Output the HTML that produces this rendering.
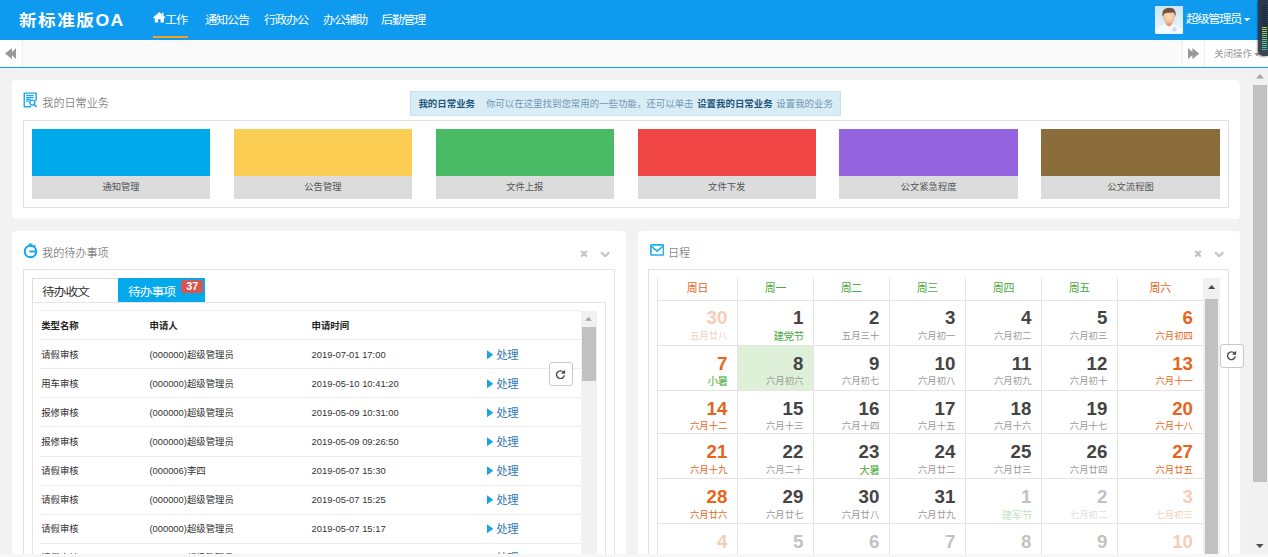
<!DOCTYPE html>
<html lang="zh-CN"><head><meta charset="utf-8"><title>新标准版OA</title>
<style>
*{box-sizing:border-box;margin:0;padding:0}
html,body{width:1268px;height:557px;overflow:hidden;background:#f2f2f2}
body{position:relative;font-family:"Liberation Sans","Noto Sans CJK SC",sans-serif;font-size:9.4px;color:#333;-webkit-font-smoothing:antialiased}
.abs{position:absolute}
.t{position:absolute;white-space:nowrap;line-height:1}
#top{left:0;top:0;width:1268px;height:39.6px;background:#0e9aef}
#logo{left:19.4px;top:12.4px;font-size:16.2px;font-weight:700;color:#fff;letter-spacing:1.4px;transform:scaleX(1.086);transform-origin:0 0}
.nav{color:#fff;font-size:11.4px;letter-spacing:-1.1px;top:15px;transform:scaleX(1.07);transform-origin:0 0}
#bar2{left:0;top:39.6px;width:1268px;height:27.3px;background:#fafafa}
#bar2line{left:0;top:66.9px;width:1268px;height:1.2px;background:#0ca6e9}
.wbtn{background:#fff;top:39.6px;height:27.3px}
.panel{background:#fff;border-radius:4px}
.ibox{border:1px solid #e2e2e2;background:#fff}
.h{font-size:11.1px;color:#555;letter-spacing:0;font-weight:300}
.tile{width:178.4px;top:129px;height:69.6px;background:#dcdcdc}
.tile i{display:block;height:46.8px}
.tile span{display:block;text-align:center;font-size:9.3px;color:#555;line-height:22.8px}
.row{left:40px;width:540.5px;height:29px;border-top:1px solid #ededed}
.row .t{top:9.5px;font-size:9.4px;color:#333}
.lnk{color:#1e8fd8;font-size:12.4px;letter-spacing:-1px}
.cal{font-family:"Liberation Sans","Noto Sans CJK SC",sans-serif}
.vl{width:1px;background:#e4e4e4}
.hl{height:1px;background:#e4e4e4}
.wk{font-size:10.9px;top:282.5px;text-align:center;letter-spacing:-0.3px}
.dn{font-size:18.7px;font-weight:700;text-align:right;color:#444}
.dl{font-size:9.4px;text-align:right;color:#999}
.or{color:#e8641b}
.gr{color:#4aa93c}
.fade{opacity:.32}
</style></head>
<body>
<div id="top" class="abs"></div>
<div id="logo" class="t">新标准版OA</div>
<svg class="abs" style="left:153px;top:12.2px" width="12.6" height="11.2" viewBox="0 0 26 22" preserveAspectRatio="none"><path fill="#fff" d="M13 3.2 L3.6 11 V20.5 H10.4 V14.2 H15.6 V20.5 H22.4 V11 Z"/><path fill="#fff" d="M13 0 L0 10.8 L1.6 12.7 L13 3.3 L24.4 12.7 L26 10.8 L21.6 7.1 V1.6 H18.4 V4.5 Z"/></svg>
<div class="t nav" style="left:164.8px">工作</div>
<div class="abs" style="left:153px;top:36.1px;width:35px;height:2px;background:#f5a31a"></div>
<div class="t nav" style="left:205.2px">通知公告</div>
<div class="t nav" style="left:264.2px">行政办公</div>
<div class="t nav" style="left:322.6px">办公辅助</div>
<div class="t nav" style="left:380.8px">后勤管理</div>
<svg class="abs" style="left:1155px;top:6px" width="28" height="27.8" viewBox="0 0 56 56" preserveAspectRatio="none">
<defs><linearGradient id="avbg" x1="0" y1="0" x2="0" y2="1"><stop offset="0" stop-color="#cde4f5"/><stop offset="1" stop-color="#eef6fc"/></linearGradient>
<radialGradient id="avsk" cx="0.5" cy="0.45" r="0.6"><stop offset="0" stop-color="#fcdcb9"/><stop offset="0.7" stop-color="#f3c39a"/><stop offset="1" stop-color="#e3a57b"/></radialGradient></defs>
<rect width="56" height="56" fill="url(#avbg)"/>
<path d="M2.5 56C3 46 8 41.5 18 38.5L23 36H33L38 38.5C48 41.5 53.5 46 54 56Z" fill="#f7fafd"/>
<path d="M21.6 30H34.4V36.5C33 39.5 30.5 41.5 28 41.5C25.500 41.5 23 39.500 21.600 36.5Z" fill="#dfa074"/>
<ellipse cx="28" cy="22.500" rx="11.4" ry="12.8" fill="url(#avsk)"/>
<path d="M15.500 22C12.500 11 18 3.300 28.500 3.300C38.500 3.300 43.500 10 40.600 21.500C40 17 38.500 14 36 12.500C31.500 14.500 22 12.500 18.500 15.500C17 17.500 16.500 19.500 15.500 22Z" fill="#6f5341"/>
<circle cx="38.8" cy="46.8" r="4.600" fill="#c8dff0"/>
</svg>
<div class="t nav" style="left:1185.8px;top:13px;font-size:11.6px;letter-spacing:-1.3px">超级管理员</div>
<svg class="abs" style="left:1244px;top:17.8px" width="6.2" height="3.4" viewBox="0 0 10 5.5"><path d="M0 0H10L5 5.5Z" fill="#fff"/></svg>
<div id="bar2" class="abs"></div>
<div class="abs wbtn" style="left:0;width:23.2px;border-right:1px solid #eee"></div>
<svg class="abs" style="left:5px;top:47.8px" width="11.3" height="11.2" viewBox="0 0 22 22"><path fill="#999" d="M22 0V22L13.5 14.2V22L0 11L13.5 0V7.800Z"/></svg>
<div class="abs wbtn" style="left:1182.4px;width:22px;border-left:1px solid #eee"></div>
<svg class="abs" style="left:1188.1px;top:47.8px" width="11.3" height="11.2" viewBox="0 0 22 22"><path fill="#999" d="M0 0V22L8.500 14.2V22L22 11L8.500 0V7.800Z"/></svg>
<div class="abs wbtn" style="left:1204.4px;width:63.6px;border-left:1px solid #eee"></div>
<div class="t" style="left:1214.3px;top:49px;font-size:9.4px;color:#999">关闭操作</div>
<svg class="abs" style="left:1253.6px;top:52.6px" width="6" height="3.2" viewBox="0 0 10 5.5"><path d="M0 0H10L5 5.5Z" fill="#999"/></svg>
<div id="bar2line" class="abs"></div>
<div class="abs" style="left:1251.2px;top:68.1px;width:16.8px;height:489px;background:#f1f1f1"></div>
<svg class="abs" style="left:1255.8px;top:74.4px" width="8" height="4.4" viewBox="0 0 10 5.5"><path d="M0 5.5H10L5 0Z" fill="#a3a3a3"/></svg>
<div class="abs" style="left:1253.4px;top:84.8px;width:13.2px;height:397.5px;background:#c1c1c1"></div>
<svg class="abs" style="left:1256px;top:543.6px" width="7.6" height="4.2" viewBox="0 0 10 5.5"><path d="M0 0H10L5 5.5Z" fill="#505050"/></svg>
<div class="abs panel" style="left:12px;top:80px;width:1227.6px;height:139px"></div>
<svg class="abs" style="left:23.2px;top:91.6px" width="15" height="16" viewBox="0 0 15 16" fill="none" stroke="#1aa9ea" stroke-width="1.4">
<path d="M13.15 9.2V1.15H1.25V14.75H7.9"/><path d="M3.1 3.7H10.6M3.1 5.5H10.6M3.1 7.4H7.6M3.1 9.2H6.4" stroke-width="1.25"/><circle cx="9.3" cy="10.6" r="2.5"/><path d="M11.1 12.6L13.7 14.9" stroke-width="1.6"/></svg>
<div class="t h" style="left:42.3px;top:97.6px">我的日常业务</div>
<div class="abs" style="left:410px;top:91px;width:431.2px;height:25px;background:#d9edf7;border:1px solid #c4e3f0"></div>
<div class="t" style="left:418.4px;top:99.4px;font-size:9.45px;color:#7096b0"><b style="color:#23577a">我的日常业务</b><span style="display:inline-block;width:10.9px"></span>你可以在这里找到您常用的一些功能，还可以单击<span style="display:inline-block;width:3.6px"></span><b style="color:#1f557a">设置我的日常业务</b><span style="display:inline-block;width:3.6px"></span>设置我的业务</div>
<div class="abs ibox" style="left:23px;top:119.8px;width:1205.8px;height:88px"></div>
<div class="abs tile" style="left:31.8px"><i style="background:#00a9ea"></i><span>通知管理</span></div>
<div class="abs tile" style="left:233.7px"><i style="background:#fbce53"></i><span>公告管理</span></div>
<div class="abs tile" style="left:435.6px"><i style="background:#49bb66"></i><span>文件上报</span></div>
<div class="abs tile" style="left:637.5px"><i style="background:#f04545"></i><span>文件下发</span></div>
<div class="abs tile" style="left:839.4px"><i style="background:#9464e0"></i><span>公文紧急程度</span></div>
<div class="abs tile" style="left:1041.3px"><i style="background:#8a6d3b"></i><span>公文流程图</span></div>
<div class="abs panel" style="left:12px;top:231px;width:614px;height:340px"></div>
<svg class="abs" style="left:23.3px;top:243.3px" width="15" height="16" viewBox="0 0 15 16" fill="none" stroke="#12a8ec" stroke-width="1.9">
<circle cx="7.45" cy="8.5" r="5.8"/><path d="M6.2 8.5H12.6"/><path d="M5.4 1.2H9.4" stroke-width="1.4"/><path d="M11 2.1L12.4 3.5" stroke-width="1.6"/><path d="M7.45 3.4V4.3M7.45 12.7V13.6M2.4 8.5H3.2" stroke-width="1.3"/></svg>
<div class="t h" style="left:42.1px;top:248px">我的待办事项</div>
<svg class="abs" style="left:580.3px;top:249.8px" width="8" height="7.6" viewBox="0 0 16 15"><path d="M2.5 2L13.5 13M13.5 2L2.5 13" stroke="#c4c4c4" stroke-width="4.4" fill="none"/></svg>
<svg class="abs" style="left:600px;top:250.6px" width="10.4" height="6.8" viewBox="0 0 21 14"><path d="M2.2 2.6L10.5 10.8L18.8 2.6" stroke="#c4c4c4" stroke-width="4.6" fill="none"/></svg>
<div class="abs ibox" style="left:23px;top:268.8px;width:592px;height:300px"></div>
<div class="abs" style="left:32px;top:278px;width:86.2px;height:24.4px;border:1px solid #ddd;border-right:0;border-bottom:0;background:#fff"></div>
<div class="abs" style="left:32px;top:301.6px;width:574.4px;height:270px;border:1px solid #e4e4e4;border-bottom:0"></div>
<div class="t" style="left:42px;top:286.6px;font-size:11.9px;letter-spacing:-0.9px;color:#333;transform:scaleX(1.07);transform-origin:0 0">待办收文</div>
<div class="abs" style="left:118.2px;top:277.8px;width:87.2px;height:24.2px;background:#04a9eb"></div>
<div class="t" style="left:128px;top:286.6px;font-size:11.9px;letter-spacing:-0.9px;color:#fff;transform:scaleX(1.07);transform-origin:0 0">待办事项</div>
<div class="abs" style="left:181.2px;top:279.8px;width:22px;height:13.2px;background:#d9534f;border-radius:2.5px"></div>
<div class="t" style="left:181.2px;top:280.6px;width:22px;text-align:center;font-size:10.8px;font-weight:700;color:#fff">37</div>
<div class="abs row" style="top:310px"><div class="t" style="left:1.2px;font-weight:700;color:#222">类型名称</div><div class="t" style="left:109.6px;font-weight:700;color:#222">申请人</div><div class="t" style="left:271.6px;font-weight:700;color:#222">申请时间</div></div>
<div class="abs row" style="top:339.12px"><div class="t" style="left:1.2px">请假审核</div><div class="t" style="left:109.4px">(000000)超级管理员</div><div class="t" style="left:271.6px">2019-07-01 17:00</div><svg class="abs" style="left:446.8px;top:9.6px" width="6.4" height="9.6" viewBox="0 0 7 10"><path d="M0 0L7 5L0 10Z" fill="#16a5e9"/></svg><div class="t lnk" style="left:456.2px;top:9.4px;font-size:11.4px;letter-spacing:-0.4px;color:#337ab7">处理</div></div>
<div class="abs row" style="top:368.24px"><div class="t" style="left:1.2px">用车审核</div><div class="t" style="left:109.4px">(000000)超级管理员</div><div class="t" style="left:271.6px">2019-05-10 10:41:20</div><svg class="abs" style="left:446.8px;top:9.6px" width="6.4" height="9.6" viewBox="0 0 7 10"><path d="M0 0L7 5L0 10Z" fill="#16a5e9"/></svg><div class="t lnk" style="left:456.2px;top:9.4px;font-size:11.4px;letter-spacing:-0.4px;color:#337ab7">处理</div></div>
<div class="abs row" style="top:397.36px"><div class="t" style="left:1.2px">报修审核</div><div class="t" style="left:109.4px">(000000)超级管理员</div><div class="t" style="left:271.6px">2019-05-09 10:31:00</div><svg class="abs" style="left:446.8px;top:9.6px" width="6.4" height="9.6" viewBox="0 0 7 10"><path d="M0 0L7 5L0 10Z" fill="#16a5e9"/></svg><div class="t lnk" style="left:456.2px;top:9.4px;font-size:11.4px;letter-spacing:-0.4px;color:#337ab7">处理</div></div>
<div class="abs row" style="top:426.48px"><div class="t" style="left:1.2px">报修审核</div><div class="t" style="left:109.4px">(000000)超级管理员</div><div class="t" style="left:271.6px">2019-05-09 09:26:50</div><svg class="abs" style="left:446.8px;top:9.6px" width="6.4" height="9.6" viewBox="0 0 7 10"><path d="M0 0L7 5L0 10Z" fill="#16a5e9"/></svg><div class="t lnk" style="left:456.2px;top:9.4px;font-size:11.4px;letter-spacing:-0.4px;color:#337ab7">处理</div></div>
<div class="abs row" style="top:455.60px"><div class="t" style="left:1.2px">请假审核</div><div class="t" style="left:109.4px">(000006)李四</div><div class="t" style="left:271.6px">2019-05-07 15:30</div><svg class="abs" style="left:446.8px;top:9.6px" width="6.4" height="9.6" viewBox="0 0 7 10"><path d="M0 0L7 5L0 10Z" fill="#16a5e9"/></svg><div class="t lnk" style="left:456.2px;top:9.4px;font-size:11.4px;letter-spacing:-0.4px;color:#337ab7">处理</div></div>
<div class="abs row" style="top:484.72px"><div class="t" style="left:1.2px">请假审核</div><div class="t" style="left:109.4px">(000000)超级管理员</div><div class="t" style="left:271.6px">2019-05-07 15:25</div><svg class="abs" style="left:446.8px;top:9.6px" width="6.4" height="9.6" viewBox="0 0 7 10"><path d="M0 0L7 5L0 10Z" fill="#16a5e9"/></svg><div class="t lnk" style="left:456.2px;top:9.4px;font-size:11.4px;letter-spacing:-0.4px;color:#337ab7">处理</div></div>
<div class="abs row" style="top:513.84px"><div class="t" style="left:1.2px">请假审核</div><div class="t" style="left:109.4px">(000000)超级管理员</div><div class="t" style="left:271.6px">2019-05-07 15:17</div><svg class="abs" style="left:446.8px;top:9.6px" width="6.4" height="9.6" viewBox="0 0 7 10"><path d="M0 0L7 5L0 10Z" fill="#16a5e9"/></svg><div class="t lnk" style="left:456.2px;top:9.4px;font-size:11.4px;letter-spacing:-0.4px;color:#337ab7">处理</div></div>
<div class="abs row" style="top:542.96px"><div class="t" style="left:1.2px">请假审核</div><div class="t" style="left:109.4px">(000000)超级管理员</div><div class="t" style="left:271.6px">2019-05-07 15:10</div><svg class="abs" style="left:446.8px;top:9.6px" width="6.4" height="9.6" viewBox="0 0 7 10"><path d="M0 0L7 5L0 10Z" fill="#16a5e9"/></svg><div class="t lnk" style="left:456.2px;top:9.4px;font-size:11.4px;letter-spacing:-0.4px;color:#337ab7">处理</div></div>
<div class="abs" style="left:581px;top:310.6px;width:15.8px;height:260px;background:#f1f1f1"></div>
<svg class="abs" style="left:585.4px;top:317px" width="7" height="3.8" viewBox="0 0 10 5.5"><path d="M0 5.5H10L5 0Z" fill="#a3a3a3"/></svg>
<div class="abs" style="left:582.2px;top:327.4px;width:13.4px;height:53.6px;background:#c1c1c1"></div>
<div class="abs" style="left:548.7px;top:362px;width:24.2px;height:24px;background:rgba(255,255,255,.86);border:1px solid #c8c8c8;border-radius:3px"></div>
<svg class="abs" style="left:555.3px;top:368.6px" width="10.8" height="10.8" viewBox="0 0 20 20" fill="none"><path d="M15.9 6.4A7.2 7.2 0 1 0 17.2 11.6" stroke="#4a4a4a" stroke-width="2.6"/><path d="M18.8 1.2V8.8H11.2Z" fill="#4a4a4a"/></svg>
<div class="abs panel" style="left:638px;top:231px;width:602px;height:340px"></div>
<svg class="abs" style="left:649.6px;top:244.2px" width="14.4" height="11.8" viewBox="0 0 29 24" fill="none" stroke="#22b0f0" stroke-width="3.4"><rect x="1.7" y="1.7" width="25.6" height="20.6" rx="1"/><path d="M2.4 4.4L14.5 14.6L26.6 4.4" stroke-width="3.2"/></svg>
<div class="t h" style="left:668px;top:248px">日程</div>
<svg class="abs" style="left:1194.3px;top:249.8px" width="8" height="7.6" viewBox="0 0 16 15"><path d="M2.5 2L13.5 13M13.5 2L2.5 13" stroke="#c4c4c4" stroke-width="4.4" fill="none"/></svg>
<svg class="abs" style="left:1214px;top:250.6px" width="10.4" height="6.8" viewBox="0 0 21 14"><path d="M2.2 2.6L10.5 10.8L18.8 2.6" stroke="#c4c4c4" stroke-width="4.6" fill="none"/></svg>
<div class="abs ibox" style="left:648px;top:268.8px;width:580.6px;height:300px"></div>
<div class="abs" style="left:737.4px;top:345.5px;width:76px;height:44.6px;background:#dff0d8"></div>
<div class="abs vl" style="left:656.9px;top:277.8px;height:290px"></div>
<div class="abs vl" style="left:736.9px;top:277.8px;height:290px"></div>
<div class="abs vl" style="left:812.9px;top:277.8px;height:290px"></div>
<div class="abs vl" style="left:888.8px;top:277.8px;height:290px"></div>
<div class="abs vl" style="left:964.9px;top:277.8px;height:290px"></div>
<div class="abs vl" style="left:1040.9px;top:277.8px;height:290px"></div>
<div class="abs vl" style="left:1116.8px;top:277.8px;height:290px"></div>
<div class="abs hl" style="left:657px;top:299.8px;width:546px"></div>
<div class="abs hl" style="left:657px;top:345.0px;width:546px"></div>
<div class="abs hl" style="left:657px;top:389.6px;width:546px"></div>
<div class="abs hl" style="left:657px;top:433.1px;width:546px"></div>
<div class="abs hl" style="left:657px;top:478.1px;width:546px"></div>
<div class="abs hl" style="left:657px;top:523.0px;width:546px"></div>
<div class="t wk or" style="left:657.4px;width:80.0px">周日</div>
<div class="t wk gr" style="left:737.4px;width:76.0px">周一</div>
<div class="t wk gr" style="left:813.4px;width:75.9px">周二</div>
<div class="t wk gr" style="left:889.3px;width:76.1px">周三</div>
<div class="t wk gr" style="left:965.4px;width:76.0px">周四</div>
<div class="t wk gr" style="left:1041.4px;width:75.9px">周五</div>
<div class="t wk or" style="left:1117.3px;width:85.7px">周六</div>
<div class="t dn or fade" style="left:667.4px;width:60px;top:309.4px">30</div>
<div class="t dl or fade" style="left:667.4px;width:60px;top:330.9px">五月廿八</div>
<div class="t dn " style="left:743.4px;width:60px;top:309.4px">1</div>
<div class="t dl gr" style="left:743.4px;width:60px;top:330.9px;font-size:10.6px;letter-spacing:-0.6px">建党节</div>
<div class="t dn " style="left:819.3px;width:60px;top:309.4px">2</div>
<div class="t dl " style="left:819.3px;width:60px;top:330.9px">五月三十</div>
<div class="t dn " style="left:895.4px;width:60px;top:309.4px">3</div>
<div class="t dl " style="left:895.4px;width:60px;top:330.9px">六月初一</div>
<div class="t dn " style="left:971.4px;width:60px;top:309.4px">4</div>
<div class="t dl " style="left:971.4px;width:60px;top:330.9px">六月初二</div>
<div class="t dn " style="left:1047.3px;width:60px;top:309.4px">5</div>
<div class="t dl " style="left:1047.3px;width:60px;top:330.9px">六月初三</div>
<div class="t dn or" style="left:1133.0px;width:60px;top:309.4px">6</div>
<div class="t dl or" style="left:1133.0px;width:60px;top:330.9px">六月初四</div>
<div class="t dn or" style="left:667.4px;width:60px;top:355.4px">7</div>
<div class="t dl gr" style="left:667.4px;width:60px;top:376.2px;font-size:10.6px;letter-spacing:-0.6px">小暑</div>
<div class="t dn " style="left:743.4px;width:60px;top:355.4px">8</div>
<div class="t dl " style="left:743.4px;width:60px;top:376.2px">六月初六</div>
<div class="t dn " style="left:819.3px;width:60px;top:355.4px">9</div>
<div class="t dl " style="left:819.3px;width:60px;top:376.2px">六月初七</div>
<div class="t dn " style="left:895.4px;width:60px;top:355.4px">10</div>
<div class="t dl " style="left:895.4px;width:60px;top:376.2px">六月初八</div>
<div class="t dn " style="left:971.4px;width:60px;top:355.4px">11</div>
<div class="t dl " style="left:971.4px;width:60px;top:376.2px">六月初九</div>
<div class="t dn " style="left:1047.3px;width:60px;top:355.4px">12</div>
<div class="t dl " style="left:1047.3px;width:60px;top:376.2px">六月初十</div>
<div class="t dn or" style="left:1133.0px;width:60px;top:355.4px">13</div>
<div class="t dl or" style="left:1133.0px;width:60px;top:376.2px">六月十一</div>
<div class="t dn or" style="left:667.4px;width:60px;top:399.9px">14</div>
<div class="t dl or" style="left:667.4px;width:60px;top:420.9px">六月十二</div>
<div class="t dn " style="left:743.4px;width:60px;top:399.9px">15</div>
<div class="t dl " style="left:743.4px;width:60px;top:420.9px">六月十三</div>
<div class="t dn " style="left:819.3px;width:60px;top:399.9px">16</div>
<div class="t dl " style="left:819.3px;width:60px;top:420.9px">六月十四</div>
<div class="t dn " style="left:895.4px;width:60px;top:399.9px">17</div>
<div class="t dl " style="left:895.4px;width:60px;top:420.9px">六月十五</div>
<div class="t dn " style="left:971.4px;width:60px;top:399.9px">18</div>
<div class="t dl " style="left:971.4px;width:60px;top:420.9px">六月十六</div>
<div class="t dn " style="left:1047.3px;width:60px;top:399.9px">19</div>
<div class="t dl " style="left:1047.3px;width:60px;top:420.9px">六月十七</div>
<div class="t dn or" style="left:1133.0px;width:60px;top:399.9px">20</div>
<div class="t dl or" style="left:1133.0px;width:60px;top:420.9px">六月十八</div>
<div class="t dn or" style="left:667.4px;width:60px;top:443.0px">21</div>
<div class="t dl or" style="left:667.4px;width:60px;top:464.9px">六月十九</div>
<div class="t dn " style="left:743.4px;width:60px;top:443.0px">22</div>
<div class="t dl " style="left:743.4px;width:60px;top:464.9px">六月二十</div>
<div class="t dn " style="left:819.3px;width:60px;top:443.0px">23</div>
<div class="t dl gr" style="left:819.3px;width:60px;top:464.9px;font-size:10.6px;letter-spacing:-0.6px">大暑</div>
<div class="t dn " style="left:895.4px;width:60px;top:443.0px">24</div>
<div class="t dl " style="left:895.4px;width:60px;top:464.9px">六月廿二</div>
<div class="t dn " style="left:971.4px;width:60px;top:443.0px">25</div>
<div class="t dl " style="left:971.4px;width:60px;top:464.9px">六月廿三</div>
<div class="t dn " style="left:1047.3px;width:60px;top:443.0px">26</div>
<div class="t dl " style="left:1047.3px;width:60px;top:464.9px">六月廿四</div>
<div class="t dn or" style="left:1133.0px;width:60px;top:443.0px">27</div>
<div class="t dl or" style="left:1133.0px;width:60px;top:464.9px">六月廿五</div>
<div class="t dn or" style="left:667.4px;width:60px;top:487.9px">28</div>
<div class="t dl or" style="left:667.4px;width:60px;top:509.9px">六月廿六</div>
<div class="t dn " style="left:743.4px;width:60px;top:487.9px">29</div>
<div class="t dl " style="left:743.4px;width:60px;top:509.9px">六月廿七</div>
<div class="t dn " style="left:819.3px;width:60px;top:487.9px">30</div>
<div class="t dl " style="left:819.3px;width:60px;top:509.9px">六月廿八</div>
<div class="t dn " style="left:895.4px;width:60px;top:487.9px">31</div>
<div class="t dl " style="left:895.4px;width:60px;top:509.9px">六月廿九</div>
<div class="t dn  fade" style="left:971.4px;width:60px;top:487.9px">1</div>
<div class="t dl gr fade" style="left:971.4px;width:60px;top:509.9px;font-size:10.6px;letter-spacing:-0.6px">建军节</div>
<div class="t dn  fade" style="left:1047.3px;width:60px;top:487.9px">2</div>
<div class="t dl  fade" style="left:1047.3px;width:60px;top:509.9px">七月初二</div>
<div class="t dn or fade" style="left:1133.0px;width:60px;top:487.9px">3</div>
<div class="t dl or fade" style="left:1133.0px;width:60px;top:509.9px">七月初三</div>
<div class="t dn or fade" style="left:667.4px;width:60px;top:533.4px">4</div>
<div class="t dn  fade" style="left:743.4px;width:60px;top:533.4px">5</div>
<div class="t dn  fade" style="left:819.3px;width:60px;top:533.4px">6</div>
<div class="t dn  fade" style="left:895.4px;width:60px;top:533.4px">7</div>
<div class="t dn  fade" style="left:971.4px;width:60px;top:533.4px">8</div>
<div class="t dn  fade" style="left:1047.3px;width:60px;top:533.4px">9</div>
<div class="t dn or fade" style="left:1133.0px;width:60px;top:533.4px">10</div>
<div class="abs" style="left:1203px;top:277.8px;width:16.8px;height:290px;background:#f1f1f1"></div>
<svg class="abs" style="left:1207.8px;top:285px" width="7.4" height="4" viewBox="0 0 10 5.5"><path d="M0 5.5H10L5 0Z" fill="#484848"/></svg>
<div class="abs" style="left:1204.9px;top:299px;width:13.6px;height:270px;background:#c1c1c1"></div>
<div class="abs" style="left:1219.7px;top:343.6px;width:24.2px;height:24px;background:rgba(255,255,255,.86);border:1px solid #c8c8c8;border-radius:3px"></div>
<svg class="abs" style="left:1226.3px;top:350.2px" width="10.8" height="10.8" viewBox="0 0 20 20" fill="none"><path d="M15.9 6.4A7.2 7.2 0 1 0 17.2 11.6" stroke="#4a4a4a" stroke-width="2.6"/><path d="M18.8 1.2V8.8H11.2Z" fill="#4a4a4a"/></svg>
<div class="abs" style="left:0;top:553.7px;width:1268px;height:3.3px;background:#f7f7f7"></div>
<div class="abs" style="left:1258.2px;top:0;width:9.8px;height:55.6px;background:rgba(42,48,62,.9);border-radius:0 0 0 5px;box-shadow:-1px 1px 2px rgba(0,0,0,.35)"></div><div class="abs" style="left:1261.8px;top:5.00px;width:5px;height:1px;background:rgba(20,26,38,.55)"></div><div class="abs" style="left:1261.8px;top:7.00px;width:5px;height:1px;background:rgba(20,26,38,.55)"></div><div class="abs" style="left:1261.8px;top:9.00px;width:5px;height:1px;background:rgba(20,26,38,.55)"></div><div class="abs" style="left:1261.8px;top:11.00px;width:5px;height:1px;background:rgba(20,26,38,.55)"></div><div class="abs" style="left:1261.8px;top:13.00px;width:5px;height:1px;background:rgba(20,26,38,.55)"></div><div class="abs" style="left:1261.8px;top:15.00px;width:5px;height:1px;background:rgba(20,26,38,.55)"></div><div class="abs" style="left:1261.8px;top:17.00px;width:5px;height:1px;background:rgba(20,26,38,.55)"></div><div class="abs" style="left:1261.8px;top:19.00px;width:5px;height:1px;background:rgba(20,26,38,.55)"></div><div class="abs" style="left:1261.8px;top:21.00px;width:5px;height:1px;background:rgba(20,26,38,.55)"></div><div class="abs" style="left:1261.8px;top:23.00px;width:5px;height:1px;background:rgba(20,26,38,.55)"></div><div class="abs" style="left:1261.8px;top:25.00px;width:5px;height:1px;background:rgba(20,26,38,.55)"></div><div class="abs" style="left:1261.8px;top:27.00px;width:5px;height:1px;background:rgb(190,205,70)"></div><div class="abs" style="left:1261.8px;top:29.00px;width:5px;height:1px;background:rgb(176,204,80)"></div><div class="abs" style="left:1261.8px;top:31.00px;width:5px;height:1px;background:rgb(162,204,90)"></div><div class="abs" style="left:1261.8px;top:33.00px;width:5px;height:1px;background:rgb(149,203,100)"></div><div class="abs" style="left:1261.8px;top:35.00px;width:5px;height:1px;background:rgb(135,203,110)"></div><div class="abs" style="left:1261.8px;top:37.00px;width:5px;height:1px;background:rgb(121,202,120)"></div><div class="abs" style="left:1261.8px;top:39.00px;width:5px;height:1px;background:rgb(108,202,130)"></div><div class="abs" style="left:1261.8px;top:41.00px;width:5px;height:1px;background:rgb(94,201,140)"></div><div class="abs" style="left:1261.8px;top:43.00px;width:5px;height:1px;background:rgb(80,201,150)"></div><div class="abs" style="left:1261.8px;top:45.00px;width:5px;height:1px;background:rgb(67,200,160)"></div><div class="abs" style="left:1261.8px;top:47.00px;width:5px;height:1px;background:rgb(53,200,170)"></div><div class="abs" style="left:1261.8px;top:49.00px;width:5px;height:1px;background:rgb(40,200,180)"></div>
</body></html>
